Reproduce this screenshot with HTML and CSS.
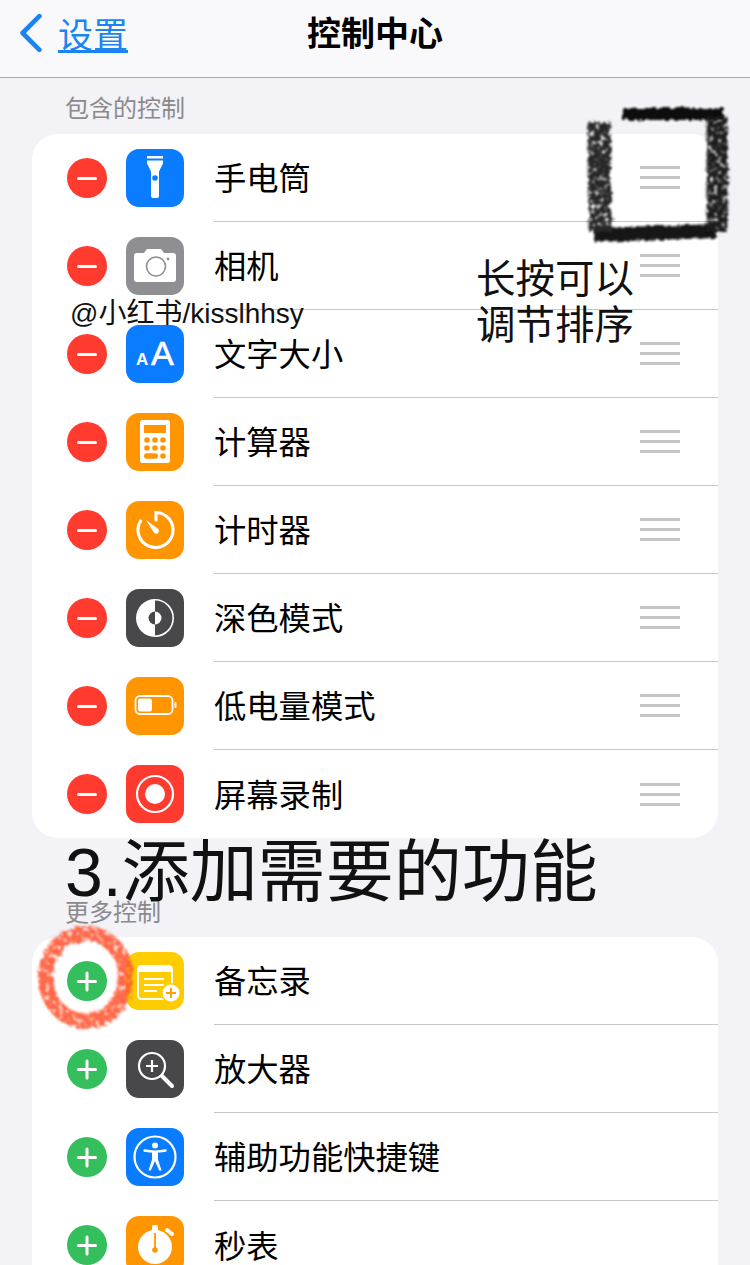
FILE: index.html
```html
<!DOCTYPE html>
<html lang="zh-CN">
<head>
    <meta charset="UTF-8">
    <meta name="viewport" content="width=device-width, initial-scale=1.0">
    <title>控制中心</title>
    <link rel="stylesheet" href="styles.css">
</head>
<body>
    <header class="nav">
        <a class="back" href="#">
            <svg class="chevron" viewBox="0 0 24 38"><path d="M20 3 4 19l16 16" fill="none" stroke="#1a84f0" stroke-width="4.4" stroke-linecap="round" stroke-linejoin="round"/></svg>
            <span class="back-label">设置</span>
        </a>
        <h1 class="title">控制中心</h1>
    </header>

    <h2 class="group-title">包含的控制</h2>
    <ul class="card">
        <li class="row">
            <span class="badge minus"></span>
            <svg class="icon" viewBox="0 0 58 58"><rect width="58" height="58" rx="13" fill="#0a7cff"/><rect x="21" y="7" width="16" height="2.5" fill="#fff"/><path d="M21 11.500h16v3l-4 8V47a2 2 0 0 1-2 2h-4a2 2 0 0 1-2-2V22.500l-4-8z" fill="#fff"/><circle cx="29" cy="29" r="2.800" fill="#0a7cff"/></svg>
            <div class="row-body"><span class="label">手电筒</span><span class="grabber"></span></div>
        </li>
        <li class="row">
            <span class="badge minus"></span>
            <svg class="icon" viewBox="0 0 58 58"><rect width="58" height="58" rx="13" fill="#8e8e93"/><path d="M11 16h7l3-4h14l3 4h9a3 3 0 0 1 3 3v23a3 3 0 0 1-3 3H11a3 3 0 0 1-3-3V19a3 3 0 0 1 3-3z" fill="#fff"/><circle cx="30" cy="29.500" r="9.500" fill="none" stroke="#8e8e93" stroke-width="1.600"/><circle cx="42" cy="22" r="1.400" fill="#8e8e93"/></svg>
            <div class="row-body"><span class="label">相机</span><span class="grabber"></span></div>
        </li>
        <li class="row">
            <span class="badge minus"></span>
            <svg class="icon" viewBox="0 0 58 58"><rect width="58" height="58" rx="13" fill="#0a7cff"/><text class="icon-text" x="10" y="40" font-size="17">A</text><text class="icon-text big" x="25" y="40" font-size="34">A</text></svg>
            <div class="row-body"><span class="label">文字大小</span><span class="grabber"></span></div>
        </li>
        <li class="row">
            <span class="badge minus"></span>
            <svg class="icon" viewBox="0 0 58 58"><rect width="58" height="58" rx="13" fill="#ff9500"/><rect x="14" y="7" width="30" height="43" rx="2.500" fill="#fff"/><rect x="18" y="12" width="22" height="8" fill="#ff9500"/><g fill="#ff9500"><circle cx="21" cy="27" r="2.800"/><circle cx="29" cy="27" r="2.800"/><circle cx="37" cy="27" r="2.800"/><circle cx="21" cy="35" r="2.800"/><circle cx="29" cy="35" r="2.800"/><circle cx="37" cy="35" r="2.800"/><rect x="18" y="40.200" width="14" height="5.500" rx="2.700"/><circle cx="37" cy="43" r="2.800"/></g></svg>
            <div class="row-body"><span class="label">计算器</span><span class="grabber"></span></div>
        </li>
        <li class="row">
            <span class="badge minus"></span>
            <svg class="icon" viewBox="0 0 58 58"><rect width="58" height="58" rx="13" fill="#ff9500"/><path d="M30 19v-7.500A17.500 17.500 0 1 1 14.500 20" fill="none" stroke="#fff" stroke-width="3.200" stroke-linecap="round"/><path d="M20 19l11.500 8.500a2.800 2.800 0 1 1-3.800 3.800z" fill="#fff"/></svg>
            <div class="row-body"><span class="label">计时器</span><span class="grabber"></span></div>
        </li>
        <li class="row">
            <span class="badge minus"></span>
            <svg class="icon" viewBox="0 0 58 58"><rect width="58" height="58" rx="13" fill="#48484a"/><path d="M29 10a19 19 0 0 0 0 38z" fill="#fff"/><path d="M29 10.800a18.200 18.200 0 0 1 0 36.400" fill="none" stroke="#fff" stroke-width="1.600"/><path d="M29 22.500a6.500 6.500 0 0 0 0 13z" fill="#48484a"/><path d="M29 22.500a6.500 6.500 0 0 1 0 13z" fill="#fff"/></svg>
            <div class="row-body"><span class="label">深色模式</span><span class="grabber"></span></div>
        </li>
        <li class="row">
            <span class="badge minus"></span>
            <svg class="icon" viewBox="0 0 58 58"><rect width="58" height="58" rx="13" fill="#ff9500"/><rect x="9.500" y="19" width="37" height="18" rx="4.500" fill="none" stroke="#fff" stroke-width="1.800"/><rect x="12" y="21.500" width="14" height="13" rx="2.500" fill="#fff"/><rect x="48.500" y="25" width="2" height="6" rx="1" fill="#fff"/></svg>
            <div class="row-body"><span class="label">低电量模式</span><span class="grabber"></span></div>
        </li>
        <li class="row">
            <span class="badge minus"></span>
            <svg class="icon" viewBox="0 0 58 58"><rect width="58" height="58" rx="13" fill="#ff3b30"/><circle cx="29" cy="29" r="18" fill="none" stroke="#fff" stroke-width="2.200"/><circle cx="29" cy="29" r="10" fill="#fff"/></svg>
            <div class="row-body"><span class="label">屏幕录制</span><span class="grabber"></span></div>
        </li>
    </ul>

    <h2 class="group-title second">更多控制</h2>
    <ul class="card">
        <li class="row">
            <span class="badge plus"></span>
            <svg class="icon" viewBox="0 0 58 58"><rect width="58" height="58" rx="13" fill="#ffcc00"/><rect x="12" y="14" width="34" height="33" rx="3.500" fill="none" stroke="#fff" stroke-width="2"/><rect x="12" y="14" width="34" height="6" fill="#fff"/><path d="M18 27h20M18 33h20M18 39h13" stroke="#fff" stroke-width="2"/><circle cx="45" cy="41" r="10" fill="#ffcc00"/><circle cx="45" cy="41" r="8.500" fill="#fff"/><path d="M45 36v10M40 41h10" stroke="#ff9f0a" stroke-width="2"/></svg>
            <div class="row-body"><span class="label">备忘录</span></div>
        </li>
        <li class="row">
            <span class="badge plus"></span>
            <svg class="icon" viewBox="0 0 58 58"><rect width="58" height="58" rx="13" fill="#48484a"/><circle cx="26" cy="26" r="13" fill="none" stroke="#fff" stroke-width="2.200"/><path d="M26 20v12M20 26h12" stroke="#fff" stroke-width="2.200"/><path d="M36 36l10 10" stroke="#fff" stroke-width="4" stroke-linecap="round"/></svg>
            <div class="row-body"><span class="label">放大器</span></div>
        </li>
        <li class="row">
            <span class="badge plus"></span>
            <svg class="icon" viewBox="0 0 58 58"><rect width="58" height="58" rx="13" fill="#0a7cff"/><circle cx="29" cy="29" r="20.500" fill="none" stroke="#fff" stroke-width="2.200"/><circle cx="29" cy="17.500" r="3" fill="#fff"/><path d="M18.500 22.500c7 1.500 14 1.500 21 0" fill="none" stroke="#fff" stroke-width="2.400" stroke-linecap="round"/><path d="M26 23.500h6v8l3.500 11h-2.300L29 33l-4.200 9.500h-2.300L26 31.500z" fill="#fff"/></svg>
            <div class="row-body"><span class="label">辅助功能快捷键</span></div>
        </li>
        <li class="row">
            <span class="badge plus"></span>
            <svg class="icon" viewBox="0 0 58 58"><rect width="58" height="58" rx="13" fill="#ff9500"/><rect x="26" y="9" width="6" height="7" rx="1.500" fill="#fff"/><circle cx="29" cy="31" r="17" fill="#fff"/><path d="M41 14l5 4" stroke="#fff" stroke-width="4" stroke-linecap="round"/><path d="M29 17v17" stroke="#ff9500" stroke-width="1.800"/><circle cx="29" cy="34" r="2.800" fill="#ff9500"/></svg>
            <div class="row-body"><span class="label">秒表</span></div>
        </li>
    </ul>

    <!-- 截图上后加的标注 -->
    <p class="note watermark">@小红书/kisslhhsy</p>
    <p class="note hint">长按可以<br>调节排序</p>
    <p class="note step">3.添加需要的功能</p>
    <svg class="scribble" viewBox="0 0 750 1265">
        <defs>
            <filter id="pencil" filterUnits="userSpaceOnUse" x="0" y="0" width="750" height="1265">
                <feTurbulence type="fractalNoise" baseFrequency="0.22" numOctaves="3" seed="4" result="noise"/>
                <feDisplacementMap in="SourceGraphic" in2="noise" scale="8" result="rough"/>
                <feColorMatrix in="noise" type="matrix" values="0 0 0 0 0  0 0 0 0 0  0 0 0 0 0  0 0 0 -4 3.100" result="grain"/>
                <feComposite in="rough" in2="grain" operator="in"/>
                <feGaussianBlur stdDeviation="0.8"/>
            </filter>
            <filter id="pencil-dense" filterUnits="userSpaceOnUse" x="0" y="0" width="750" height="1265">
                <feTurbulence type="fractalNoise" baseFrequency="0.2" numOctaves="3" seed="9" result="noise"/>
                <feDisplacementMap in="SourceGraphic" in2="noise" scale="6"/>
                <feGaussianBlur stdDeviation="0.8"/>
            </filter>
        </defs>
        <g filter="url(#pencil-dense)" fill="none">
            <path d="M622 114H724" stroke="#0a0a0a" stroke-width="12"/>
            <path d="M594 235 716 231" stroke="#141414" stroke-width="14"/>
        </g>
        <g filter="url(#pencil)" fill="none">
            <path d="M717 116V232" stroke="#1a1a1a" stroke-width="21"/>
            <path d="M599 122 600 232" stroke="#262626" stroke-width="23"/>
            <ellipse cx="85.500" cy="977" rx="40" ry="44" stroke="#ff5a36" stroke-width="15" opacity="0.92"/>
        </g>
    </svg>
</body>
</html>
```

FILE: styles.css
```css
html, body {
    margin: 0;
    height: 1265px;
    overflow: hidden;
}
body {
    position: relative;
    background-color: #f2f2f7;
    color: #000;
    font-family: "Noto Sans CJK SC", "Liberation Sans", sans-serif;
}
.nav {
    display: flex;
    align-items: center;
    justify-content: center;
    position: relative;
    height: 77px;
    background-color: #f9f9fb;
    border-bottom: 1px solid #a9a9ab;
}
.back {
    position: absolute;
    left: 18px;
    top: 13px;
    display: flex;
    align-items: center;
    gap: 14px;
    color: #1a84f0;
}
.chevron {
    width: 26px;
    height: 40px;
}
.back-label {
    font-size: 35px;
    line-height: 40px;
    text-decoration: underline;
    text-underline-offset: 2px;
}
.title {
    margin: 0 0 14px;
    font-size: 34px;
    line-height: 44px;
    font-weight: 700;
}
.group-title {
    margin: 0;
    padding: 12px 0 10px 65px;
    font-size: 24px;
    line-height: 34px;
    font-weight: 400;
    color: #8a8a8e;
}
.group-title.second {
    padding-top: 56px;
    padding-bottom: 9px;
}
.card {
    list-style: none;
    margin: 0 32px;
    padding: 0;
    background-color: #fff;
    border-radius: 26px;
}
.row {
    display: flex;
    align-items: center;
    height: 88px;
    padding-left: 35px;
}
.badge {
    position: relative;
    flex: none;
    width: 40px;
    height: 40px;
    border-radius: 50%;
}
.badge::before, .badge::after {
    content: "";
    position: absolute;
    left: 10px;
    top: 18.5px;
    width: 20px;
    height: 3px;
    border-radius: 2px;
    background-color: #fff;
}
.minus {
    background-color: #ff3b30;
}
.minus::after {
    display: none;
}
.plus {
    background-color: #34bf5c;
}
.plus::after {
    transform: rotate(90deg);
}
.icon {
    flex: none;
    width: 58px;
    height: 58px;
    margin-left: 19px;
}
.icon-text {
    font-family: "Liberation Sans", sans-serif;
    font-weight: 700;
    fill: #fff;
}
.icon-text.big {
    font-weight: 400;
    stroke: #fff;
    stroke-width: 0.6px;
}
.row-body {
    flex: 1;
    display: flex;
    align-items: center;
    justify-content: space-between;
    height: 88px;
    margin-left: 30px;
    padding-right: 38px;
    border-bottom: 1px solid #c6c6c8;
    box-sizing: border-box;
}
.label {
    font-size: 32.3px;
    line-height: 44px;
    margin-bottom: 3px;
}
.grabber {
    width: 40px;
    height: 23px;
    border-top: 3px solid #c4c4c6;
    border-bottom: 3px solid #c4c4c6;
    box-sizing: border-box;
    background: linear-gradient(#c4c4c6, #c4c4c6) center / 100% 3px no-repeat;
}
.row:last-child .row-body {
    border-bottom: none;
}
.note {
    position: absolute;
    margin: 0;
    white-space: nowrap;
    color: #111;
    font-family: "Liberation Sans", "Noto Sans CJK SC", sans-serif;
}
.watermark {
    left: 70px;
    top: 296px;
    font-size: 28px;
    line-height: 36px;
}
.hint {
    left: 476px;
    top: 256px;
    font-size: 39.5px;
    line-height: 46px;
}
.step {
    left: 65px;
    top: 832px;
    font-size: 68px;
    line-height: 80px;
}
.scribble {
    position: absolute;
    left: 0;
    top: 0;
    width: 750px;
    height: 1265px;
    pointer-events: none;
}
```
